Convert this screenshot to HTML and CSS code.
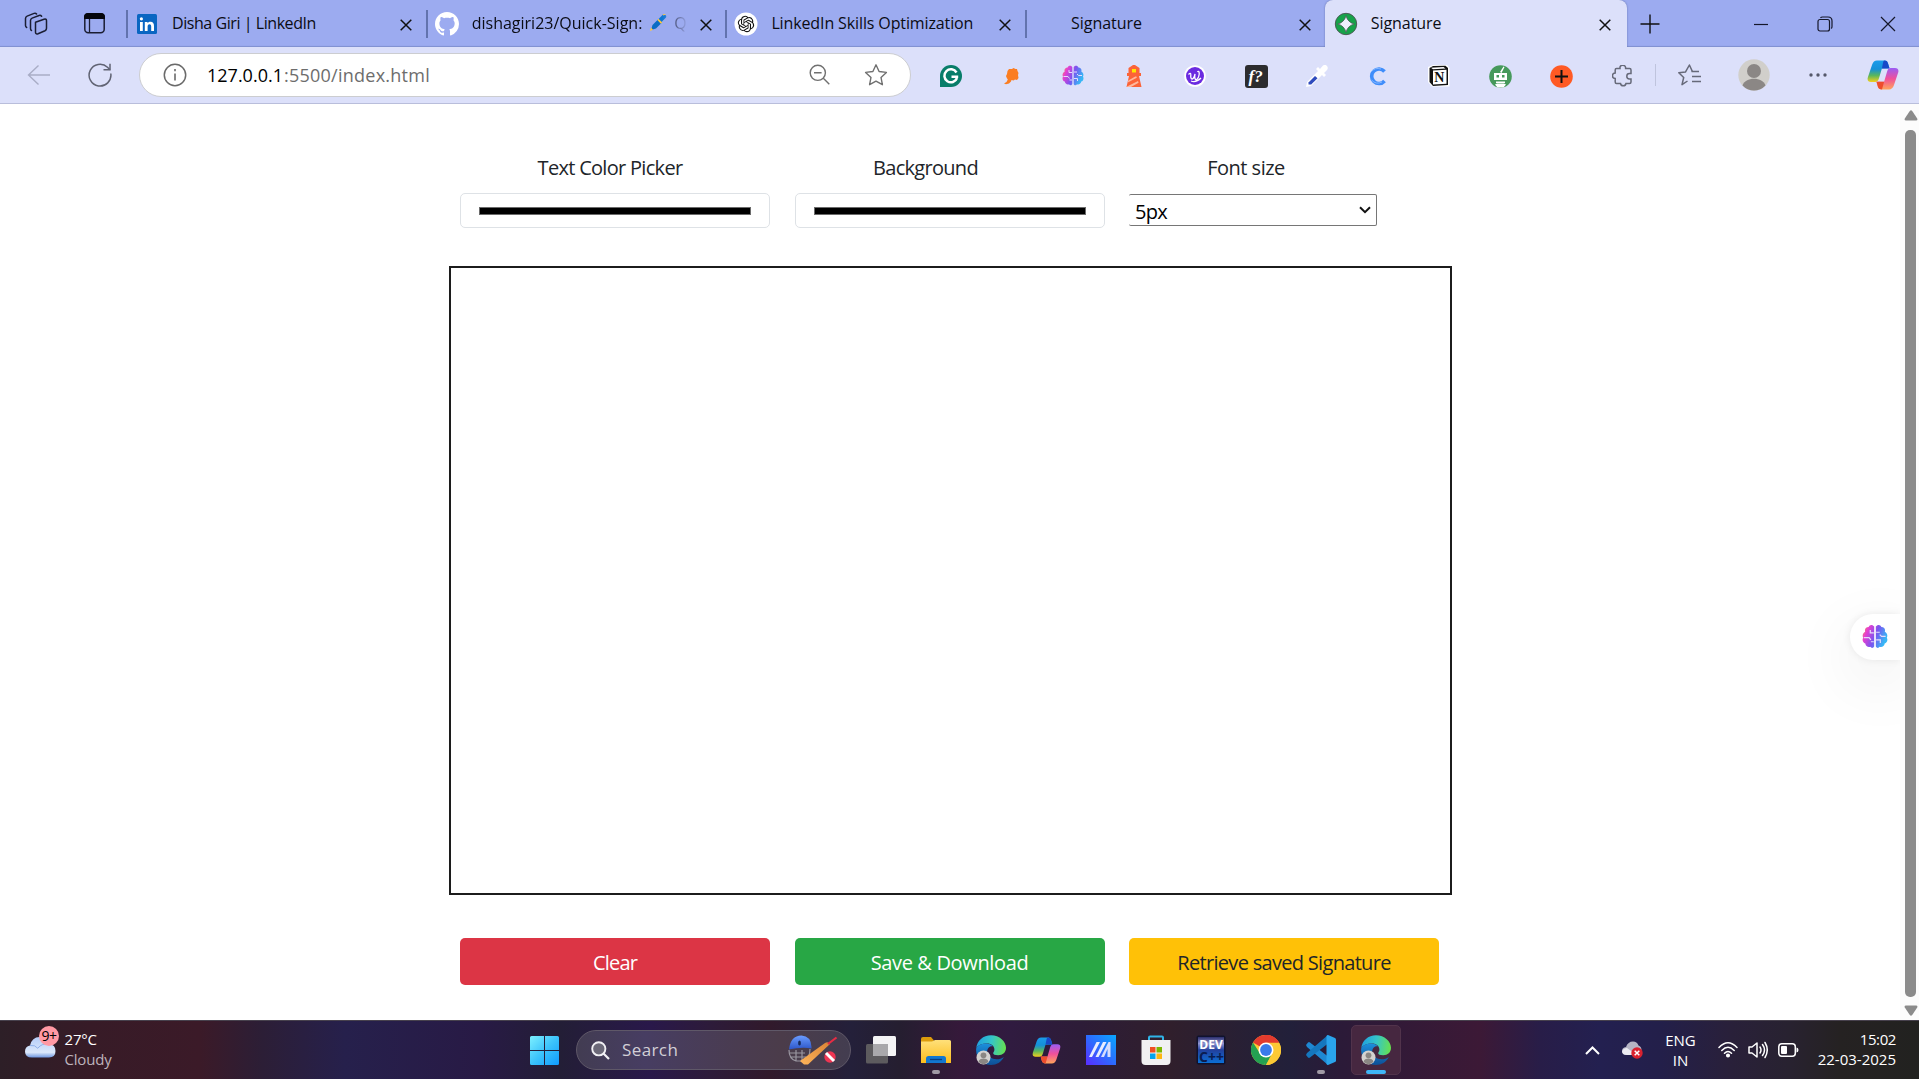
FILE: index.html
```html
<!DOCTYPE html>
<html lang="en">
<head>
<meta charset="utf-8">
<title>Signature</title>
<link rel="stylesheet" href="styles.css">
</head>
<body>
<svg class="defs" aria-hidden="true">
  <defs>
    <linearGradient id="gBrain" x1="0" y1="0" x2="1" y2=".4"><stop offset="0" stop-color="#ff9a3c"/><stop offset=".25" stop-color="#e63fd0"/><stop offset=".6" stop-color="#7a55f0"/><stop offset="1" stop-color="#38b6f5"/></linearGradient>
    <linearGradient id="gCopA" x1="0" y1="0" x2="0" y2="1"><stop offset="0" stop-color="#1a9bea"/><stop offset=".4" stop-color="#1590d8"/><stop offset=".7" stop-color="#5bb75b"/><stop offset="1" stop-color="#f4cf1c"/></linearGradient>
    <linearGradient id="gCopB" x1="0" y1="0" x2="0" y2="1"><stop offset="0" stop-color="#9a5cf5"/><stop offset=".5" stop-color="#f0509a"/><stop offset="1" stop-color="#ffa45a"/></linearGradient>
    <linearGradient id="gEdgeTop" x1="0" y1=".4" x2="1" y2=".5"><stop offset="0" stop-color="#1f9fe0"/><stop offset=".5" stop-color="#35c5c8"/><stop offset="1" stop-color="#66e050"/></linearGradient>
    <linearGradient id="gEdgeLow" x1="0" y1="0" x2="0" y2="1"><stop offset="0" stop-color="#1c8fdc"/><stop offset="1" stop-color="#0d4f96"/></linearGradient>
    <linearGradient id="gWin" x1="0" y1="0" x2="1" y2="1"><stop offset="0" stop-color="#7df0ff"/><stop offset=".5" stop-color="#3cc3fb"/><stop offset="1" stop-color="#0f9bff"/></linearGradient>
    <linearGradient id="gCloud" x1="0" y1="0" x2="0" y2="1"><stop offset="0" stop-color="#b5cdf8"/><stop offset=".75" stop-color="#dbe8fb"/><stop offset="1" stop-color="#6f97e0"/></linearGradient>
    <linearGradient id="gFolder" x1="0" y1="0" x2="0" y2="1"><stop offset="0" stop-color="#ffe07a"/><stop offset="1" stop-color="#fcbd1c"/></linearGradient>
    <linearGradient id="gArm" x1="0" y1="1" x2="1" y2="0"><stop offset="0" stop-color="#5a2cff"/><stop offset=".5" stop-color="#2c6cff"/><stop offset="1" stop-color="#08a8ff"/></linearGradient>
    <linearGradient id="gDev" x1="0" y1="0" x2="0" y2="1"><stop offset="0" stop-color="#2a2d6c"/><stop offset=".25" stop-color="#8d93cf"/><stop offset=".5" stop-color="#23409c"/><stop offset="1" stop-color="#0b6fd6"/></linearGradient>
    <linearGradient id="gBat" x1="0" y1="1" x2="1" y2="0"><stop offset="0" stop-color="#ffb45a"/><stop offset="1" stop-color="#d98436"/></linearGradient>
    <linearGradient id="gHelm" x1="0" y1="0" x2="0" y2="1"><stop offset="0" stop-color="#6a9cff"/><stop offset="1" stop-color="#2c55c8"/></linearGradient>
    <symbol id="x" viewBox="0 0 12 12"><path d="M.7.7l10.6 10.6M11.3.7L.7 11.3" fill="none" stroke="#111" stroke-width="1.5"/></symbol>
    <symbol id="brain" viewBox="0 0 22 22"><path d="M10.3 2.2C9 .2 6.300.4 5.600 2.600 3 2.600 2 4.800 2.700 6.600.6 7.800.1 10 1 11.600-.1 13.600.8 16 2.800 16.600c.2 2.200 2.400 3.400 4.200 2.700 1.100 1.500 2.700 1 3.300-.3zM11.700 2.200C13 .2 15.700.4 16.400 2.600c2.600 0 3.600 2.200 2.900 4 2.100 1.200 2.600 3.400 1.700 5 1.100 2 .2 4.400-1.800 5-.2 2.200-2.400 3.400-4.200 2.700-1.100 1.500-2.700 1-3.300-.3z" fill="url(#gBrain)"/><path d="M10 7.500H7V5M1.500 11.500H6l1.500 2M10 15H7.500M12 7h3M12 13.500h3.500V16M20 10.500h-3.500L15 9" fill="none" stroke="#e6dcfb" stroke-width="1"/></symbol>
    <symbol id="copilot" viewBox="0 0 32 30"><path d="M22.500 8.200l-1.500-5C20.300 1 19 .6 17 .6H10C7.600.6 6 2 5 5L.9 17.200C-.1 20.300 1.200 22 4 22h4.200c2 0 3-1.100 3.700-3.400l3-10z" fill="url(#gCopA)"/><path d="M17 .6c2.500 0 3.300.6 4 2.800l1.500 5H15c1-5 1-6.500 2-7.800z" fill="#1748c8"/><path d="M9.500 21.800l1.300 4.600c.7 2.200 2 3 4 3H22c2.400 0 4-1.400 5-4.400l4.100-12.200c1-3.100-.3-4.800-3.100-4.800h-4.200c-2 0-3 1.100-3.700 3.400l-3 10.400z" fill="url(#gCopB)"/><path d="M9.500 21.800h7.600L15 29.400c-2.400 0-3.500-.8-4.200-3z" fill="#ee4d2c"/></symbol>
    <symbol id="edge" viewBox="0 0 30 30"><path d="M.2 13.500C1 5.500 7.200.2 15 .2c8.600 0 15 6.200 15 12.500 0 4.600-3.300 7.500-7.800 7.500-3.400 0-5-1-5-2 0-.8 1.200-1.400 1.200-3.600 0-3.400-3-6-7.400-6C6 8.600 1.600 10.500.2 13.500z" fill="url(#gEdgeTop)"/><path d="M.2 13.500C1.600 10.200 6 8.600 10 8.600c3 0 5.600 1.200 7 2.800-4-.6-5.800 2.400-5.800 5.200 0 5 4.600 7.700 9.300 7.700 3 0 5.300-.8 7.300-2.300C25.500 27 20.500 30 15 30 6.400 30-.8 22.500.2 13.500z" fill="url(#gEdgeLow)"/><circle cx="7.500" cy="22.500" r="7" fill="#d4d2d0"/><circle cx="7.500" cy="20.300" r="2.900" fill="#8a8683"/><path d="M2.600 26.700c.6-4.200 9.200-4.200 9.800 0-2.600 3.300-7.200 3.300-9.800 0z" fill="#8a8683"/></symbol>
  </defs>
</svg>

<header class="tabs">
  <div class="tab-tools">
    <svg class="ti" width="24" height="24" viewBox="0 0 24 24" fill="none" stroke="#1b1e33" stroke-width="1.5" stroke-linejoin="round" stroke-linecap="round"><path d="M11.500 10.200l8.500-3q2.500-.7 2.500 1.600v7.400q0 1.800-1.500 2.500l-7 3q-2.500.8-2.500-1.500z"/><path d="M7.500 18.500q-1-.4-1-2V8.500q0-1.800 1.600-2.400l7-2.600q1.500-.5 2.500.8"/><path d="M2.700 15.500q-1.200-.6-1.200-2V6.500q0-1.800 1.600-2.400l7-2.700q1.500-.5 2.500.6"/></svg>
    <svg class="ti" width="21" height="21" viewBox="0 0 21 21"><rect x=".8" y=".8" width="19.400" height="19" rx="3.500" fill="none" stroke="#1b1e33" stroke-width="1.500"/><path d="M0 6V4q0-4 4-4h13q4 0 4 4v2z" fill="#05060c"/><path d="M5.500 6v13.500" stroke="#1b1e33" stroke-width="1.300"/></svg>
  </div>
  <div class="tab">
    <svg class="fav" width="22" height="22" viewBox="0 0 22 22"><rect x="1" y="1" width="20" height="20" rx="1.500" fill="#0a66c2"/><path d="M4 9h2.800v9H4zM8.800 9h2.700v1.300c.6-1 1.600-1.500 2.900-1.500 2.700 0 3.600 1.700 3.600 4.300V18h-2.800v-4.400c0-1.300-.3-2.400-1.700-2.400-1.400 0-1.900 1-1.900 2.400V18H8.800z" fill="#fff"/><circle cx="5.400" cy="5.800" r="1.600" fill="#fff"/></svg>
    <span class="title"><span class="t-disha">Disha Giri | LinkedIn</span></span><svg class="close"><use href="#x"/></svg>
  </div>
  <div class="tab">
    <svg class="fav" width="24" height="24" viewBox="0 0 16 16"><path fill="#fff" d="M8 0C3.580 0 0 3.580 0 8c0 3.540 2.290 6.530 5.470 7.590.4.070.55-.17.55-.38 0-.19-.01-.82-.01-1.490-2.010.37-2.530-.49-2.690-.94-.09-.23-.48-.94-.82-1.130-.28-.15-.68-.52-.01-.53.63-.01 1.080.58 1.230.82.72 1.210 1.870.87 2.330.66.070-.52.280-.87.510-1.070-1.780-.2-3.640-.89-3.640-3.950 0-.87.310-1.590.82-2.150-.08-.2-.36-1.020.08-2.120 0 0 .67-.21 2.200.82.640-.18 1.320-.27 2-.27s1.360.09 2 .27c1.530-1.040 2.200-.82 2.200-.82.44 1.100.16 1.920.08 2.120.51.560.82 1.270.82 2.150 0 3.070-1.870 3.750-3.650 3.950.29.250.54.730.54 1.480 0 1.070-.01 1.930-.01 2.200 0 .21.150.46.550.38A8.010 8.010 0 0 0 16 8c0-4.420-3.580-8-8-8z"/></svg>
    <span class="title fade"><span>dishagiri23/Quick-Sign:</span><svg class="pen" width="17" height="17" viewBox="0 0 17 17"><path d="M1 16l1.500-5 6-6 3.500 3.500-6 6z" fill="#0b6cc4"/><path d="M8 5.500l5-5q1.300-.8 2.500.4t.5 2.600l-5 5z" fill="#0e76d2"/><path d="M7.300 6l3.600 3.700 1.300-1.200-3.700-3.700zM0 17l1-3.500L3 15.700z" fill="#ffc83d"/><path d="M13 1l2.500-1" stroke="#ffc83d" stroke-width="1.200"/></svg>Q</span><svg class="close"><use href="#x"/></svg>
  </div>
  <div class="tab">
    <svg class="fav" width="24" height="24" viewBox="0 0 24 24"><circle cx="12" cy="12" r="11.500" fill="#fff"/><path transform="translate(3.800 3.800) scale(.683)" fill="#111" d="M22.2819 9.8211a5.9847 5.9847 0 0 0-.5157-4.9108 6.0462 6.0462 0 0 0-6.5098-2.9A6.0651 6.0651 0 0 0 4.9807 4.1818a5.9847 5.9847 0 0 0-3.9977 2.9 6.0462 6.0462 0 0 0 .7427 7.0966 5.98 5.98 0 0 0 .511 4.9107 6.051 6.051 0 0 0 6.5146 2.9001A5.9847 5.9847 0 0 0 13.2599 24a6.0557 6.0557 0 0 0 5.7718-4.2058 5.9894 5.9894 0 0 0 3.9977-2.9001 6.0557 6.0557 0 0 0-.7475-7.0729zm-9.022 12.6081a4.4755 4.4755 0 0 1-2.8764-1.0408l.1419-.0804 4.7783-2.7582a.7948.7948 0 0 0 .3927-.6813v-6.7369l2.02 1.1686a.071.071 0 0 1 .038.052v5.5826a4.504 4.504 0 0 1-4.4945 4.4944zm-9.6607-4.1254a4.4708 4.4708 0 0 1-.5346-3.0137l.142.0852 4.783 2.7582a.7712.7712 0 0 0 .7806 0l5.8428-3.3685v2.3324a.0804.0804 0 0 1-.0332.0615L9.74 19.9502a4.4992 4.4992 0 0 1-6.1408-1.6464zM2.3408 7.8956a4.485 4.485 0 0 1 2.3655-1.9728V11.6a.7664.7664 0 0 0 .3879.6765l5.8144 3.3543-2.0201 1.1685a.0757.0757 0 0 1-.071 0l-4.8303-2.7865A4.504 4.504 0 0 1 2.3408 7.872zm16.5963 3.8558L13.1038 8.364 15.1192 7.2a.0757.0757 0 0 1 .071 0l4.8303 2.7913a4.4944 4.4944 0 0 1-.6765 8.1042v-5.6772a.79.79 0 0 0-.407-.667zm2.0107-3.0231l-.142-.0852-4.7735-2.7818a.7759.7759 0 0 0-.7854 0L9.409 9.2297V6.8974a.0662.0662 0 0 1 .0284-.0615l4.8303-2.7866a4.4992 4.4992 0 0 1 6.6802 4.66zM8.3065 12.863l-2.02-1.1638a.0804.0804 0 0 1-.038-.0567V6.0742a4.4992 4.4992 0 0 1 7.3757-3.4537l-.142.0805L8.704 5.459a.7948.7948 0 0 0-.3927.6813zm1.0976-2.3654l2.602-1.4998 2.6069 1.4998v2.9994l-2.5974 1.4997-2.6067-1.4997Z"/></svg>
    <span class="title"><span class="t-skills">LinkedIn Skills Optimization</span></span><svg class="close"><use href="#x"/></svg>
  </div>
  <div class="tab">
    <span class="fav blank"></span>
    <span class="title"><span class="t-sig">Signature</span></span><svg class="close"><use href="#x"/></svg>
  </div>
  <div class="tab active">
    <svg class="fav" width="24" height="24" viewBox="0 0 24 24"><circle cx="12" cy="12" r="10.700" fill="#16a34a" stroke="#4b5b55" stroke-width="1"/><path d="M12 3.700q1.700 6.600 8.300 8.300-6.600 1.700-8.300 8.300-1.700-6.600-8.300-8.300 6.600-1.700 8.300-8.300z" fill="#eef0fd" stroke="#4b5b55" stroke-width=".8"/></svg>
    <span class="title"><span class="t-sig">Signature</span></span><svg class="close"><use href="#x"/></svg>
  </div>
  <svg class="plus" width="20" height="20" viewBox="0 0 20 20"><path d="M.5 10h19M10 .5v19" stroke="#111" stroke-width="1.400"/></svg>
  <div class="win">
    <svg width="16" height="16" viewBox="0 0 16 16" fill="none" stroke="#15172a" stroke-width="1.200"><path d="M1 8.500h14"/></svg>
    <svg width="16" height="16" viewBox="0 0 16 16" fill="none" stroke="#15172a" stroke-width="1.200"><rect x="1" y="3.500" width="11.500" height="11.500" rx="2"/><path d="M3.500 1.800q.6-.8 2-.8H11q4 0 4 4v5.500q0 1.400-.8 2"/></svg>
    <svg width="16" height="16" viewBox="0 0 16 16" fill="none" stroke="#15172a" stroke-width="1.200"><path d="M1 1l14 14M15 1L1 15"/></svg>
  </div>
</header>

<nav class="toolbar">
  <svg class="back" width="24" height="22" viewBox="0 0 24 22" fill="none" stroke="#a9adc6" stroke-width="1.400"><path d="M23 11H1.500M11.500 1.500L1.500 11l10 9.500"/></svg>
  <svg class="reload" width="24" height="24" viewBox="0 0 24 24" fill="none" stroke="#606373" stroke-width="1.500"><path d="M22.800 10.500A10.900 10.900 0 1 1 19.500 4.200l2.500 2.600"/><path d="M22 .8v6h-6.500"/></svg>
  <div class="address">
    <svg width="24" height="24" viewBox="0 0 24 24"><circle cx="12" cy="12" r="10.700" fill="none" stroke="#6a6a6a" stroke-width="1.500"/><path d="M12 10.500v7M12 6v2.200" stroke="#6a6a6a" stroke-width="1.600"/></svg>
    <span class="url"><b>127.0.0.1</b><span class="t-path">:5500/index.html</span></span>
    <svg width="22" height="22" viewBox="0 0 22 22" fill="none" stroke="#707070" stroke-width="1.400"><circle cx="8.800" cy="8.800" r="7.600"/><path d="M14.300 14.300l6 6M5 8.800h7.600"/></svg>
    <svg class="star" width="24" height="24" viewBox="0 0 24 24"><path d="M12 1.800l3.100 6.700 7.300.9-5.400 5 1.400 7.300L12 18.100l-6.400 3.600L7 14.400l-5.400-5 7.300-.9z" fill="none" stroke="#707070" stroke-width="1.400" stroke-linejoin="round"/></svg>
  </div>
  <div class="exts">
    <svg width="22" height="22" viewBox="0 0 22 22"><path d="M0 22V11A11 11 0 1 1 11 22z" fill="#087d69"/><path d="M16.500 7.500A6.500 6.500 0 1 0 17 13M11.500 11.800h6.700" fill="none" stroke="#fff" stroke-width="2.500"/></svg>
    <svg width="22" height="22" viewBox="0 0 22 22"><path d="M7.500 6l1.500-2 3 0 1.500-1 2 1 1.500 0 .5 2 1 2-.5 2 .5 3-1.500 2-2-.5-1.500 1-2-.5-.5 1.500-2 2-3 .8-2-.8 2.500-1.500 1.300-2.500-1-1.500-.8-2 1-2z" transform="translate(-1 0)" fill="#fb7d21"/></svg>
    <svg width="22" height="22" viewBox="0 0 22 22"><use href="#brain"/></svg>
    <svg width="22" height="22" viewBox="0 0 22 22"><path d="M10 0h2l4.500 3v5h1.500v3h-2l2.500 11H3.500L6 11H4V8h1.500V3z" fill="#fb6338"/><path d="M5.300 15.500l7-4h1.200l.3 1.200-9 4.800zM4 21.500l11-5.500.6 1.800-7.600 4.200H4z" fill="#ffb89c"/><rect x="9" y="4" width="4" height="3.500" fill="#ffe600"/></svg>
    <svg width="22" height="22" viewBox="0 0 22 22"><circle cx="11" cy="11" r="10.800" fill="#fff"/><circle cx="11" cy="11" r="9" fill="#6b2be0"/><path d="M4.500 9.500q2.500-2.500 2.300.5c-.6 5.500 2.700 5.500 4.200-1-1 6 1.500 7.500 3.500 3 1.800-4.500 0-7-1-5M7 16q5 2 10-3" fill="none" stroke="#fff" stroke-width="1.300"/></svg>
    <svg width="23" height="23" viewBox="0 0 23 23"><rect width="23" height="23" rx="3" fill="#2c2c2e"/><text x="3.500" y="17" class="fq">f?</text></svg>
    <svg width="22" height="22" viewBox="0 0 22 22"><path d="M0 22l1-5L12 6l-2-2 2-2 2 2 3-3.500q2.500-1.500 4 .5t0 4L18 8l2 2-2 2-2-2L5 21z" fill="#fff"/><path d="M2.500 19.500v-2l6.500-6.500 2.500 2.200-6.300 6.300z" fill="#2f4bbd"/></svg>
    <svg width="22" height="22" viewBox="0 0 22 22"><path d="M17.500 6.500A7.300 7.300 0 1 0 17.500 16" fill="none" stroke="#3f8dfa" stroke-width="3.600"/><path d="M4 7Q8 2 14 4M4.500 15Q9 20 15 17" stroke="#85b7ff" stroke-width="1" fill="none"/></svg>
    <svg width="22" height="22" viewBox="0 0 22 22"><path d="M0 2L5 0l14 0 2.500 3v18.500L4 21.500 0 17z" fill="#fff"/><path d="M1.500 3L5 1l12.500-.2L20 3v17L5 21 1.500 17z" fill="#111"/><path d="M5 5.500l13.500-.8v14L5 19.600zM3 2.800l12.500-.8 2 1.400-12.500.8z" fill="#fff"/><text x="6.200" y="17.300" class="nn">N</text></svg>
    <svg width="23" height="23" viewBox="0 0 23 23"><circle cx="11.500" cy="11.500" r="11.300" fill="#46995b"/><path d="M5 8h13v7H5zM7 16.500h9V18H7zM6 19.500l2-1h7l2 1-2.500 3h-6zM11 7l3.500-5.500 1 .5L12.500 8z" fill="#fff"/><path d="M7.500 10h2.500v2.500H7.500zM13 10h2.500v2.500H13z" fill="#46995b"/></svg>
    <svg width="23" height="23" viewBox="0 0 23 23"><circle cx="11.500" cy="11.500" r="11.300" fill="#ff5a24"/><path d="M5 11.500h13M11.500 5v13" stroke="#111" stroke-width="2"/></svg>
    <svg width="22" height="22" viewBox="0 0 22 22"><path d="M4.500 3.500H8a2.800 2.800 0 0 1 5.600-1v1h4q1.400 0 1.400 1.500v3.500h-1.500a2.700 2.700 0 0 0 0 5.400H19V17q0 1.500-1.500 1.500H14a2.800 2.800 0 0 1-5.500 0h-4Q3.200 18.500 3.200 17v-3.500a2.700 2.700 0 0 1 0-5.500V5q0-1.500 1.300-1.500z" fill="none" stroke="#666979" stroke-width="1.500"/></svg>
  </div>
  <span class="vline"></span>
  <svg class="favs" width="24" height="22" viewBox="0 0 24 22" fill="none" stroke="#666979" stroke-width="1.500" stroke-linejoin="round"><path d="M13.500 7.500H21M14 12.500h9M14 17.500h9" /><path d="M9.500 17l-5.500 3.700L5.700 13.500.8 8.800l6.600-.7L11.400 1l3 6.500"/></svg>
  <svg class="avatar" width="32" height="32" viewBox="0 0 32 32"><circle cx="16" cy="16" r="15.700" fill="#d1cfcb"/><circle cx="16" cy="12" r="7" fill="#8b8785"/><path d="M4.500 26.500C7 17.500 25 17.500 27.500 26.500a15.700 15.700 0 0 1-23 0z" fill="#8b8785"/></svg>
  <svg class="dots" width="20" height="6" viewBox="0 0 20 6" fill="#55586a"><circle cx="3" cy="3" r="1.700"/><circle cx="10" cy="3" r="1.700"/><circle cx="17" cy="3" r="1.700"/></svg>
  <svg class="cop" width="32" height="30"><use href="#copilot"/></svg>
</nav>

<main class="page">
  <section class="board">
    <div class="controls">
      <div class="field"><label>Text Color Picker</label><div class="swatch"><i></i></div></div>
      <div class="field"><label>Background</label><div class="swatch"><i></i></div></div>
      <div class="field"><label class="t-font">Font size</label><div class="select"><span>5px</span><svg width="12" height="8" viewBox="0 0 12 8"><path d="M1 1.200l5 5 5-5" fill="none" stroke="#111" stroke-width="2"/></svg></div></div>
    </div>
    <div class="canvas"></div>
    <div class="actions">
      <button class="btn clear">Clear</button>
      <button class="btn save">Save &amp; Download</button>
      <button class="btn retrieve">Retrieve saved Signature</button>
    </div>
  </section>
  <div class="float"><svg width="26" height="26"><use href="#brain"/></svg></div>
  <aside class="scroll">
    <svg width="14" height="11" viewBox="0 0 14 11"><path d="M5.800 1q1.200-1.400 2.400 0l5 7.500Q14 10.500 12 10.500H2Q0 10.500.8 8.500z" fill="#8b8b8b"/></svg>
    <span class="thumb"></span>
    <svg width="14" height="11" viewBox="0 0 14 11"><path d="M5.800 10q1.200 1.400 2.400 0l5-7.500Q14 .5 12 .5H2Q0 .5.8 2.500z" fill="#8b8b8b"/></svg>
  </aside>
</main>

<footer class="taskbar">
  <div class="weather">
    <div class="cloud"><svg width="31" height="22" viewBox="0 0 31 22"><path d="M7 21.500q-7 0-7-6 0-5 5-6Q7 1 14.500 1 22 1 24 8q6.500.5 6.500 7 0 6.500-6.500 6.500z" fill="url(#gCloud)"/><path d="M5 9.500q5-1 8 3M13 12q4-5 11-4" fill="none" stroke="#8fb0ea" stroke-width="1"/></svg><span class="badge">9+</span></div>
    <div class="wtext"><span>27°C</span><span class="dim">Cloudy</span></div>
  </div>
  <div class="center">
    <svg class="start" width="29" height="29" viewBox="0 0 29 29"><path d="M0 1.500Q0 0 1.500 0H14v14H0zM15 0h12.500Q29 0 29 1.500V14H15zM0 15h14v14H1.500Q0 29 0 27.500zM15 15h14v12.500q0 1.500-1.500 1.500H15z" fill="url(#gWin)"/></svg>
    <div class="search">
      <svg width="19" height="19" viewBox="0 0 19 19"><circle cx="7.800" cy="7.800" r="6.600" fill="#6b6878" stroke="#f1f0f4" stroke-width="1.900"/><path d="M12.500 12.500l5.500 5.500" stroke="#f1f0f4" stroke-width="2.200"/></svg>
      <span>Search</span>
      <svg class="cricket" width="50" height="30" viewBox="0 0 50 30"><path d="M1 15q0 9 7 11h8q6-3 6-12M2 18h15M3 22h15M8 15v11M14 15v11" fill="none" stroke="#9a96a0" stroke-width="1.200"/><path d="M1 14.500Q2.500.5 13.500.5 23 1 23.500 12v1.500q-9-2-23 1z" fill="url(#gHelm)"/><ellipse cx="11.500" cy="8" rx="1.400" ry="2.600" fill="#162a5c"/><path d="M12 26L37 8q3-2 5 1L20 29.500h-4z" fill="url(#gBat)"/><path d="M40 9l8.500-6.500" stroke="#e62c44" stroke-width="2.200"/><circle cx="42" cy="22" r="5.700" fill="#ef3552"/><path d="M38 18l8 8" stroke="#fff" stroke-width="3"/></svg>
    </div>
    <div class="apps">
      <div class="app"><svg width="30" height="30" viewBox="0 0 30 30"><rect x="0" y="9" width="22" height="19.500" rx="1.500" fill="#5d5b5e"/><rect x="7" y="1" width="23" height="20" rx="1.500" fill="#f4f4f5"/><path d="M7 9h15v12H8.500Q7 21 7 19.500z" fill="#a9a8ab"/></svg></div>
      <div class="app run"><svg width="30" height="30" viewBox="0 0 30 30"><path d="M0 4q0-2 2-2h8l3 3.500V9H0z" fill="#dc9c0c"/><path d="M0 28V6.500h11L14 5h14.500Q30 5 30 6.500V28z" fill="url(#gFolder)"/><path d="M5 28v-4.500Q5 21 7.500 21h15q2.500 0 2.500 2.500V28z" fill="#1277cf"/><path d="M9 24.500h12" stroke="#0a3f80" stroke-width="1.300"/></svg></div>
      <div class="app"><svg width="30" height="30"><use href="#edge"/></svg></div>
      <div class="app"><svg width="29" height="27"><use href="#copilot"/></svg></div>
      <div class="app"><svg width="30" height="30" viewBox="0 0 30 30"><path d="M0 0h30v30H0z" fill="url(#gArm)"/><path d="M3 22L10.500 7H14L6 22zM9.500 22L17 7h3.500L12.500 22z" fill="#e8ecff"/><path d="M15 22L22.500 7H24.500v15h-3v-8l-3.500 8z" fill="#d5ddff"/></svg></div>
      <div class="app"><svg width="30" height="30" viewBox="0 0 30 30"><path d="M8 6V2.500Q8 1.500 9 1.500h12q1 0 1 1V6" fill="none" stroke="#2fb4e8" stroke-width="2"/><path d="M.5 5h29v21q0 4-4 4h-21q-4 0-4-4z" fill="#f1f1f2"/><path fill="#f04f23" d="M9 12h5.500v5.500H9z"/><path fill="#7db700" d="M15.500 12H21v5.500h-5.500z"/><path fill="#05a4ee" d="M9 18.500h5.500V24H9z"/><path fill="#fdb713" d="M15.500 18.500H21V24h-5.500z"/></svg></div>
      <div class="app"><svg width="30" height="30" viewBox="0 0 30 30"><rect x=".5" y=".5" width="29" height="29" rx="2" fill="#10132e"/><rect x="2" y="2" width="26" height="26" fill="url(#gDev)"/><text x="15" y="13.500" class="dev">DEV</text><text x="15.500" y="27" class="cpp">C++</text></svg></div>
      <div class="app"><svg width="30" height="30" viewBox="0 0 30 30"><circle cx="15" cy="15" r="15" fill="#fcc934"/><path d="M15 15L2 7.500A15 15 0 0 1 28 7.500z" fill="#e33b2e"/><path d="M2 7.500L9 18.500l6 3.500L13.500 30h1.500A15 15 0 0 1 2 7.500z" fill="#24a152"/><path d="M15 15l6 3.500L15 30h-1.500z" fill="#24a152"/><path d="M28 7.500A15 15 0 0 1 15 30l6.500-11.500Q23 14 20 9.500L15 7.500z" fill="#fcc934"/><path d="M15 7.500h13Q22 -1 14 0z" fill="#e33b2e"/><circle cx="15" cy="15" r="7.500" fill="#fff"/><circle cx="15" cy="15" r="5.900" fill="#3a7bea"/></svg></div>
      <div class="app run"><svg width="30" height="30" viewBox="0 0 30 30"><path d="M0 10l2-2.500q1-.8 2 0L22 21.500V30L1 12z" fill="#1e88d2"/><path d="M0 20l2 2.500q1 .8 2 0L22 8.500V0L1 18z" fill="#1577be"/><path d="M22 0l7 3q1 .5 1 1.500v21q0 1-1 1.500l-7 3q-1 0-1.500-1V1Q21 0 22 0z" fill="#2aa4ec"/></svg></div>
      <div class="app current"><svg width="30" height="30"><use href="#edge"/></svg></div>
    </div>
  </div>
  <div class="tray">
    <svg class="up" width="15" height="9" viewBox="0 0 15 9"><path d="M1 8l6.500-6.500L14 8" fill="none" stroke="#fff" stroke-width="2"/></svg>
    <svg class="drive" width="21" height="18" viewBox="0 0 21 18"><path d="M5 14q-5 0-5-4 0-3.500 4-4Q6 .5 11 .5q4 0 5.500 4 3 1 3 4.500l-8 5z" fill="#b6b5c4"/><path d="M0 10.500Q1 7 5 7l7 5-3 2H5q-4.500 0-5-3.500z" fill="#ecebf2"/><circle cx="15" cy="12" r="5.700" fill="#d9222f"/><path d="M12.700 9.700l4.600 4.600M17.300 9.700l-4.600 4.600" stroke="#fff" stroke-width="1.500"/></svg>
    <div class="lang"><span>ENG</span><span>IN</span></div>
    <svg class="wifi" width="20" height="16" viewBox="0 0 20 16" fill="none" stroke="#fff" stroke-width="1.500" stroke-linecap="round"><path d="M1 5.500q9-9.500 18 0M3.800 8.500q6.200-6.500 12.400 0M6.500 11.200q3.500-3.500 7 0"/><circle cx="10" cy="13.500" r="1.300" fill="#fff"/></svg>
    <svg class="spk" width="20" height="18" viewBox="0 0 20 18" fill="none" stroke="#fff" stroke-width="1.500" stroke-linejoin="round" stroke-linecap="round"><path d="M1 6h3l5-4v14l-5-4H1zM12 6q2 3 0 6M14.500 3.500q4 5.500 0 11M17 1.500q4.500 7.500 0 15"/></svg>
    <svg class="batt" width="21" height="14" viewBox="0 0 21 14"><rect x=".8" y=".8" width="16.500" height="12.400" rx="3" fill="none" stroke="#fff" stroke-width="1.500"/><rect x="3" y="3" width="6" height="8" rx="1" fill="#fff"/><path d="M18.500 4.500q2 .3 2 2.500t-2 2.500z" fill="#fff"/></svg>
    <div class="clock"><span class="t-time">15:02</span><span>22-03-2025</span></div>
  </div>
</footer>
</body>
</html>
```
FILE: styles.css
```css
* { box-sizing: border-box; }
html, body { margin: 0; height: 100%; overflow: hidden; }
body {
  display: flex; flex-direction: column; width: 1919px; height: 1079px;
  background: #fff; color: #212529;
  font-family: "Open Sans", "Noto Sans", sans-serif;
}
svg { display: block; flex: none; }
.defs { position: absolute; width: 0; height: 0; }

/* Tab strip */
.tabs { display: flex; align-items: center; height: 47px; flex: none; background: #9cabf0; box-shadow: inset 0 -2px 1px -1px #8090cf; }
.tab-tools { display: flex; align-items: center; gap: 36px; width: 126px; padding-left: 24px; }
.tab { display: flex; align-items: center; width: 299.700px; height: 47px; padding-left: 9px; background: linear-gradient(#6273ae, #6273ae) 0 10px / 2px 28px no-repeat; }
.fav { width: 24px; flex: none; }
.fav.blank { height: 24px; }
.title { display: flex; align-items: center; width: 222px; margin-left: 13px; padding-bottom: 2px; overflow: hidden; white-space: nowrap; font-size: 16px; line-height: 24px; color: #0b0c14; }
.title.fade { width: 215px; margin-right: 7px; -webkit-mask: linear-gradient(90deg, #000 190px, transparent 216px); mask: linear-gradient(90deg, #000 190px, transparent 216px); }
.t-disha { letter-spacing: -.44px; }
.t-skills { letter-spacing: -.12px; }
.t-sig { letter-spacing: -.05px; }
.pen { margin: 0 7px 0 8px; }
.close { width: 12px; height: 12px; margin-left: 6px; margin-top: 2px; }
.tab.active { width: 302px; background: #dce0fa; border-radius: 8px 8px 0 0; box-shadow: 0 0 2px #5f6ea8; clip-path: inset(-3px -3px 0 -3px); }
.plus { margin-left: 13.500px; }
.win { display: flex; gap: 47.500px; margin-left: auto; margin-right: 23px; padding-top: 1px; }

/* Navigation bar */
.toolbar { display: flex; align-items: center; height: 57px; flex: none; padding-left: 27px; background: #dce0fa; border-bottom: 1px solid #b9bedb; }
.reload { margin-left: 37px; }
.address { display: flex; align-items: center; width: 772px; height: 44px; margin-left: 27px; padding: 0 22px 0 23px; background: #fff; border: 1px solid #cccdd0; border-radius: 22px; }
.url { flex: 1; display: flex; margin-left: 20px; font-size: 18px; line-height: 24px; color: #6d6d6d; }
.url b { font-weight: 400; color: #000; margin-right: 1px; }
.t-path { letter-spacing: .25px; }
.star { margin-left: 33px; }
.exts { display: grid; grid-template-columns: repeat(12, 61.100px); justify-items: center; align-items: center; margin-left: 9px; padding-top: 2px; }
.fq { font: italic 700 17px "Liberation Serif", serif; fill: #fff; }
.nn { font: 700 14px "Liberation Serif", serif; fill: #111; }
.vline { width: 1px; height: 22px; margin-left: 2px; background: #bfc4dd; }
.favs { margin-left: 22px; }
.avatar { margin-left: 36px; }
.dots { margin-left: 38px; }
.cop { margin-left: 39px; }

/* Page */
.page { position: relative; display: flex; justify-content: space-between; height: 916px; flex: none; padding-left: 448px; background: #fff; }
.board { width: 1004px; }
.controls, .actions { display: grid; grid-template-columns: repeat(3, 310px); gap: 24.500px; padding: 0 12px 0 12px; }
.controls { padding-top: 51px; font-size: 20px; line-height: 26px; letter-spacing: -.7px; }
.t-font { letter-spacing: -.5px; }
.field label { display: block; width: 300px; padding-bottom: 12px; text-align: center; }
.field:nth-child(2) label { width: 262px; }
.field:nth-child(3) label { width: 234px; }
.swatch { height: 34.500px; padding: 13px 18px; border: 1px solid #dee2e6; border-radius: 5px; }
.swatch i { display: block; height: 8px; background: #000; border: 1px solid #6b6b6b; }
.select { display: flex; align-items: center; justify-content: space-between; width: 247.500px; height: 32.500px; margin-top: .5px; padding: 4px 5px 0 6px; border: 1px solid #767676; border-left: 0; border-radius: 2px; color: #000; }
.select svg { margin-bottom: 3px; }
.canvas { width: 1003.500px; height: 629px; margin: 38px 0 0 .5px; border: 2.500px solid #1c1c1c; }
.actions { margin-top: 43px; }
.btn { height: 47px; border: 0; border-radius: 5px; padding: 4px 0 0; color: #fff; font: 20px/28px "Open Sans", "Noto Sans", sans-serif; letter-spacing: -.69px; }
.clear { background: #dc3545; letter-spacing: -.8px; }
.save { background: #28a745; letter-spacing: -.35px; }
.retrieve { background: #ffc107; color: #212529; }
.float { position: absolute; left: 1850px; top: 510px; width: 50px; height: 46px; padding: 10px 12px; background: #fff; border-radius: 23px 0 0 23px; box-shadow: 0 20px 60px 10px rgba(0, 0, 0, .05), 0 0 8px rgba(0, 0, 0, .08); clip-path: inset(-100px 0 -120px -100px); }
.scroll { display: flex; flex-direction: column; align-items: center; justify-content: space-between; width: 19px; padding: 6px 0 4px 2px; background: #fcfcfc; z-index: 1; }
.thumb { width: 11px; height: 867px; border-radius: 5px; background: #8b8b8b; }

/* Taskbar */
.taskbar {
  display: flex; align-items: center; height: 59px; flex: none; border-top: 1px solid #47414d; color: #fff; font-size: 15px; line-height: 20px;
  background: linear-gradient(90deg, #2d1f27 0, #371b27 90px, #3b1a28 200px, #2c1e36 262px, #26204c 345px, #281a45 480px, #231e36 560px, #29184a 650px, #2d1b3a 710px, #311a2b 770px, #24203a 850px, #251e30 900px, #35193a 960px, #301b40 1010px, #2d1c38 1080px, #301f2c 1170px, #22203a 1290px, #2b1a38 1340px, #3c1936 1480px, #281d48 1540px, #232050 1600px, #231f4a 1660px, #29203a 1730px, #282230 1790px, #252222 1840px, #222220 1919px);
}
.weather { display: flex; align-items: center; gap: 8.500px; width: 530px; padding-left: 25px; }
.cloud { position: relative; padding-bottom: 7px; }
.badge { position: absolute; left: 14px; top: -10px; width: 20px; height: 20px; border-radius: 50%; background: #ff99a4; color: #000; font-size: 14px; line-height: 20px; text-align: center; letter-spacing: -.5px; }
.wtext, .lang, .clock { display: flex; flex-direction: column; }
.wtext { padding-bottom: 2px; letter-spacing: -.2px; }
.wtext span { height: 20px; }
.dim { color: #bdb3bb; align-self: flex-start; }
.center { display: flex; align-items: center; width: 871px; }
.search { display: flex; align-items: center; width: 275px; height: 40px; margin-left: 17px; padding: 0 12px 0 14px; border: 1px solid #5f5868; border-radius: 20px; background: linear-gradient(90deg, #423c52, #473d62 25%, #4a3c50 60%, #4b3c4a 75%, #433d50); font-size: 17px; color: #d2cfd6; }
.search span { margin-left: 12px; flex: none; letter-spacing: .4px; }
.cricket { margin-left: auto; }
.apps { display: flex; gap: 5px; margin-left: 5px; }
.app { position: relative; display: flex; align-items: center; justify-content: center; width: 50px; height: 50px; border-radius: 5px; }
.run::after, .current::after { content: ""; position: absolute; bottom: 1px; width: 8px; height: 4px; border-radius: 2px; background: #a09aa5; }
.current { background: #462740; border: 1px solid #51334b; }
.current::after { bottom: 0; width: 20px; background: #3fb6f8; }
.dev { font: 700 12px "Open Sans", sans-serif; fill: #fff; text-anchor: middle; }
.cpp { font: 700 14px "Open Sans", sans-serif; fill: #0a1c50; text-anchor: middle; }
.tray { display: flex; align-items: center; margin-left: auto; padding-right: 23px; }
.drive { margin-left: 22px; }
.lang { align-items: center; width: 31px; margin-left: 22px; padding-bottom: 1px; }
.wifi { margin-left: 22px; }
.spk { margin-left: 10px; }
.batt { margin-left: 10px; }
.clock { align-items: flex-end; width: 79px; margin-left: 18px; padding-bottom: 2px; }
.t-time { letter-spacing: -.4px; }
```
